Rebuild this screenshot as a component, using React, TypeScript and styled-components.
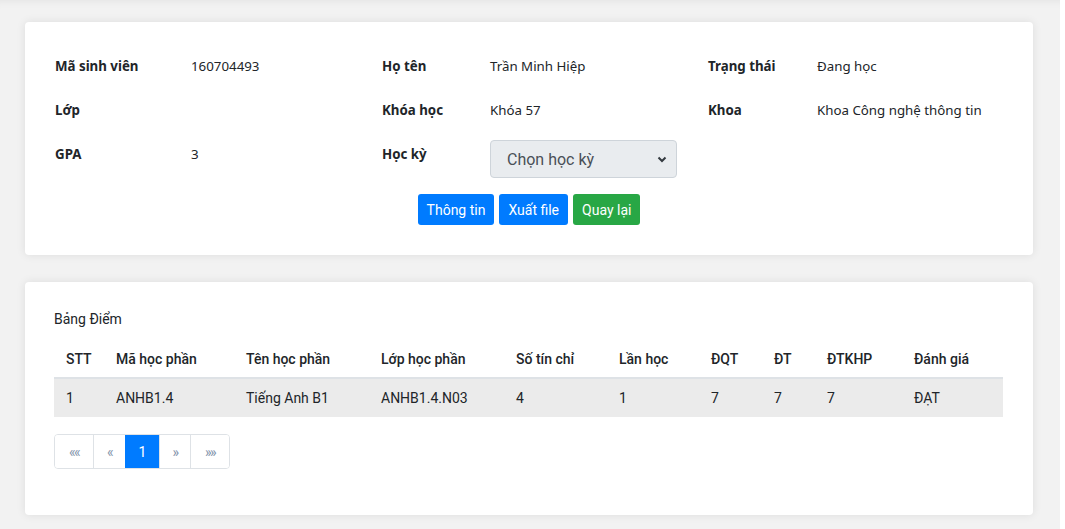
import React from "react";
import styled, { createGlobalStyle } from "styled-components";

const GlobalStyle = createGlobalStyle`
  html, body { margin: 0; padding: 0; background: #ffffff; }
  body { font-family: "Noto Sans", "Open Sans", sans-serif; color: #212529; }
  * { box-sizing: border-box; }
`;

const Page = styled.div`
  display: flex;
  min-height: 529px;
`;

const Main = styled.main`
  width: 1060px;
  background: #f2f2f2;
  box-shadow: inset 0 8px 10px -8px rgba(0, 0, 0, 0.08);
  padding: 22px 27px 14px 25px;
  display: flex;
  flex-direction: column;
  gap: 27px;
`;

const Card = styled.section<{ $pad?: string }>`
  background: #fff;
  border-radius: 4px;
  box-shadow: 0 0 10px rgba(0, 0, 0, 0.09);
  padding: ${(p) => p.$pad || "30px"};
  height: 233px;
`;

const InfoGrid = styled.div`
  display: grid;
  grid-template-columns: 136px 191px 108px 218px 109px 1fr;
  row-gap: 16px;
  align-items: start;
`;

const Label = styled.div`
  font-weight: 700;
  font-size: 13.3px;
  line-height: 28px;
  color: #212529;
`;

const Value = styled.div`
  font-size: 13.3px;
  line-height: 28px;
  color: #212529;
`;

const SelectBox = styled.div`
  width: 187px;
  height: 38px;
  background: #e9ecef;
  border: 1px solid #ced4da;
  border-radius: 4px;
  display: flex;
  align-items: center;
  justify-content: space-between;
  padding: 0 9px 0 16px;
  font-family: Roboto, "Liberation Sans", sans-serif;
  font-size: 16px;
  color: #495057;
`;

const Actions = styled.div`
  display: flex;
  justify-content: center;
  gap: 5px;
  margin-top: 16px;
`;

const Button = styled.button<{ $variant: "primary" | "success" }>`
  height: 31px;
  padding: 0 9px;
  border: none;
  border-radius: 3px;
  font-family: Roboto, "Liberation Sans", sans-serif;
  font-size: 14px;
  color: #fff;
  background: ${(p) => (p.$variant === "success" ? "#28a745" : "#007bff")};
`;

const Title = styled.div`
  font-family: Roboto, "Liberation Sans", sans-serif;
  font-size: 14px;
  line-height: 21px;
  color: #212529;
  margin-bottom: 10px;
`;

const Table = styled.table`
  width: 949px;
  border-collapse: collapse;
  font-family: Roboto, "Liberation Sans", sans-serif;
  font-size: 14px;
  color: #212529;
  table-layout: fixed;
`;

const Th = styled.th`
  text-align: left;
  font-weight: 500;
  height: 38px;
  padding: 0 12px;
  border-bottom: 2px solid #dee2e6;
  white-space: nowrap;
`;

const Td = styled.td`
  height: 39px;
  padding: 0 12px;
  background: #ebebeb;
  white-space: nowrap;
`;

const Pager = styled.nav`
  display: inline-flex;
  margin-top: 17px;
  border: 1px solid #dee2e6;
  border-radius: 4px;
  overflow: hidden;
  height: 35px;
`;

const PageItem = styled.span<{ $w: number; $active?: boolean }>`
  width: ${(p) => p.$w}px;
  display: flex;
  align-items: center;
  justify-content: center;
  border-left: 1px solid ${(p) => (p.$active ? "#007bff" : "#dee2e6")};
  background: ${(p) => (p.$active ? "#007bff" : "#fff")};
  color: ${(p) => (p.$active ? "#fff" : "#8393ab")};
  font-family: Roboto, "Liberation Sans", sans-serif;
  font-size: 14px;
  letter-spacing: ${(p) => (p.$active ? "0" : "-1.5px")};
  &:first-child { border-left: none; }
`;

const cols = [50, 130, 135, 135, 103, 92, 63, 53, 87, 101];
const heads = ["STT", "Mã học phần", "Tên học phần", "Lớp học phần", "Số tín chỉ", "Lần học", "ĐQT", "ĐT", "ĐTKHP", "Đánh giá"];
const row = ["1", "ANHB1.4", "Tiếng Anh B1", "ANHB1.4.N03", "4", "1", "7", "7", "7", "ĐẠT"];

export default function App() {
  return (
    <Page>
      <GlobalStyle />
      <Main>
        <Card>
          <InfoGrid>
            <Label>Mã sinh viên</Label>
            <Value>160704493</Value>
            <Label>Họ tên</Label>
            <Value>Trần Minh Hiệp</Value>
            <Label>Trạng thái</Label>
            <Value>Đang học</Value>

            <Label>Lớp</Label>
            <Value></Value>
            <Label>Khóa học</Label>
            <Value>Khóa 57</Value>
            <Label>Khoa</Label>
            <Value>Khoa Công nghệ thông tin</Value>

            <Label>GPA</Label>
            <Value>3</Value>
            <Label>Học kỳ</Label>
            <SelectBox>
              <span>Chọn học kỳ</span>
              <svg width="10" height="8" viewBox="0 0 10 8">
                <path d="M1.5 2.5 L5 6 L8.5 2.5" fill="none" stroke="#343a40" strokeWidth="2" />
              </svg>
            </SelectBox>
          </InfoGrid>
          <Actions>
            <Button $variant="primary">Thông tin</Button>
            <Button $variant="primary">Xuất file</Button>
            <Button $variant="success">Quay lại</Button>
          </Actions>
        </Card>
        <Card $pad="27px 30px 30px 29px">
          <Title>Bảng Điểm</Title>
          <Table>
            <colgroup>
              {cols.map((w, i) => (
                <col key={i} style={{ width: w }} />
              ))}
            </colgroup>
            <thead>
              <tr>
                {heads.map((h) => (
                  <Th key={h}>{h}</Th>
                ))}
              </tr>
            </thead>
            <tbody>
              <tr>
                {row.map((c, i) => (
                  <Td key={i}>{c}</Td>
                ))}
              </tr>
            </tbody>
          </Table>
          <Pager>
            <PageItem $w={38}>««</PageItem>
            <PageItem $w={32}>«</PageItem>
            <PageItem $w={34} $active>1</PageItem>
            <PageItem $w={31}>»</PageItem>
            <PageItem $w={39}>»»</PageItem>
          </Pager>
        </Card>
      </Main>
    </Page>
  );
}
